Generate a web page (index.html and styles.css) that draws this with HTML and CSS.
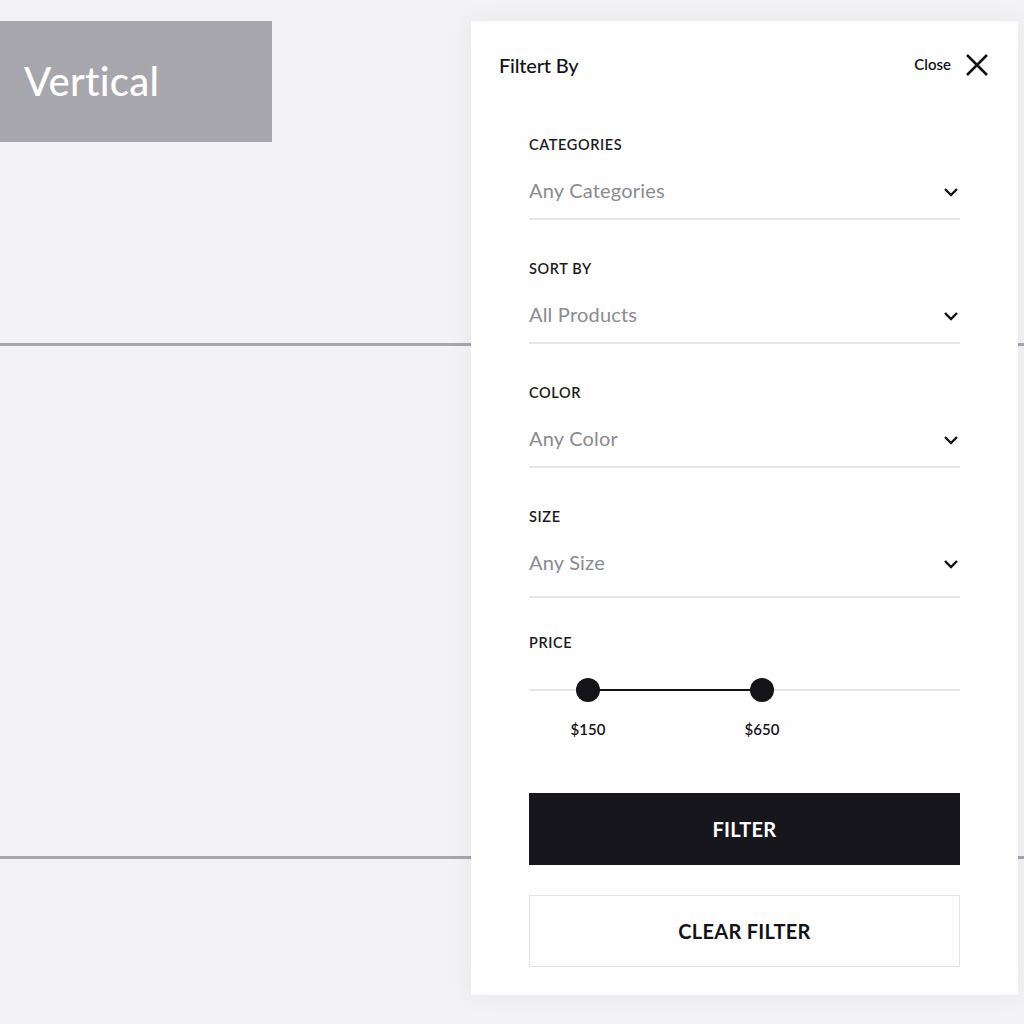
FILE: index.html
```html
<!DOCTYPE html>
<html lang="en">
<head>
<meta charset="utf-8">
<title>Filter</title>
<link rel="stylesheet" href="styles.css">
</head>
<body>
<div class="canvas">
  <div class="tag">Vertical</div>
  <div class="rule rule-top"></div>
  <div class="rule rule-bottom"></div>
</div>

<aside class="panel">
  <header class="panel-head">
    <h1 class="panel-title">Filtert By</h1>
    <button class="close">
      <span>Close</span>
      <svg width="24" height="24" viewBox="0 0 24 24" aria-hidden="true"><path d="M2 2 L22 22 M22 2 L2 22" stroke="#141418" stroke-width="2.6" fill="none"/></svg>
    </button>
  </header>

  <div class="fields">
    <div class="field">
      <div class="label">CATEGORIES</div>
      <div class="select"><span>Any Categories</span><svg class="chev" width="16" height="10" viewBox="0 0 16 10"><path d="M2 2 L8 8 L14 2" stroke="#141418" stroke-width="2.4" fill="none"/></svg></div>
    </div>
    <div class="field">
      <div class="label">SORT BY</div>
      <div class="select"><span>All Products</span><svg class="chev" width="16" height="10" viewBox="0 0 16 10"><path d="M2 2 L8 8 L14 2" stroke="#141418" stroke-width="2.4" fill="none"/></svg></div>
    </div>
    <div class="field">
      <div class="label">COLOR</div>
      <div class="select"><span>Any Color</span><svg class="chev" width="16" height="10" viewBox="0 0 16 10"><path d="M2 2 L8 8 L14 2" stroke="#141418" stroke-width="2.4" fill="none"/></svg></div>
    </div>
    <div class="field field-tall">
      <div class="label">SIZE</div>
      <div class="select"><span>Any Size</span><svg class="chev" width="16" height="10" viewBox="0 0 16 10"><path d="M2 2 L8 8 L14 2" stroke="#141418" stroke-width="2.4" fill="none"/></svg></div>
    </div>
    <div class="field price">
      <div class="label">PRICE</div>
      <div class="slider">
        <div class="track"></div>
        <div class="range" style="left:59px;width:174px"></div>
        <div class="thumb" style="left:59px"><span class="val">$150</span></div>
        <div class="thumb" style="left:233px"><span class="val">$650</span></div>
      </div>
    </div>
  </div>

  <div class="actions">
    <button class="btn btn-primary">FILTER</button>
    <button class="btn btn-outline">CLEAR FILTER</button>
  </div>
</aside>
</body>
</html>
```

FILE: styles.css
```css
* { box-sizing: border-box; }
html, body { margin: 0; padding: 0; }
body {
  width: 1024px;
  height: 1024px;
  background: #f3f3f5;
  font-family: "Lato", "Noto Sans", sans-serif;
  color: #141418;
  position: relative;
  overflow: hidden;
}

.canvas {
  padding-top: 21px;
  display: flex;
  flex-direction: column;
}
.tag {
  width: 272px;
  height: 121px;
  background: #a7a6ad;
  color: #fff;
  font-size: 40px;
  font-weight: 500;
  padding-left: 24px;
  display: flex;
  align-items: center;
  padding-bottom: 2px;
  letter-spacing: 0.3px;
}
.rule {
  height: 3px;
  background: #a6a6ab;
  width: 100%;
}
.rule-top { margin-top: 201px; }
.rule-bottom { margin-top: 510px; }

.panel {
  position: absolute;
  left: 471px;
  top: 21px;
  width: 547px;
  height: 974px;
  background: #fdfefd;
  box-shadow: 0 0 24px rgba(0,0,0,0.06);
  padding: 0 58px 0 58px;
  display: flex;
  flex-direction: column;
}

.panel-head {
  display: flex;
  align-items: center;
  justify-content: space-between;
  height: 88px;
  margin: 0 -29px 0 -30px;
  padding-bottom: 1px;
}
.panel-title {
  margin: 0;
  font-size: 20px;
  font-weight: 500;
  letter-spacing: -0.2px;
}
.close {
  background: none;
  border: 0;
  padding: 0;
  display: flex;
  align-items: center;
  gap: 14px;
  font-family: inherit;
  font-size: 15px;
  font-weight: 600;
  color: #141418;
}
.close span { margin-top: -2px; }

.fields {
  display: flex;
  flex-direction: column;
  padding-top: 26px;
}
.field {
  height: 124px;
  display: flex;
  flex-direction: column;
}
.field-tall { height: 126px; }
.label {
  font-size: 14.5px;
  font-weight: 600;
  letter-spacing: 0.6px;
  line-height: 20px;
  color: #1c1c20;
}
.select {
  display: flex;
  align-items: center;
  justify-content: space-between;
  height: 65px;
  border-bottom: 2px solid #e6e6e8;
  padding-top: 6px;
}
.select span {
  font-size: 20px;
  color: #8b8b90;
  letter-spacing: 0.2px;
}
.chev { margin-top: 4px; margin-right: 1px; }
.field-tall .select { height: 71px; padding-top: 0; }

.price { height: auto; }
.slider {
  position: relative;
  height: 130px;
}
.track {
  position: absolute;
  left: 0; right: 0;
  top: 36px;
  height: 2px;
  background: #e6e6e8;
}
.range {
  position: absolute;
  top: 36px;
  height: 2px;
  background: #141418;
}
.thumb {
  position: absolute;
  top: 37px;
  width: 24px;
  height: 24px;
  margin: -12px 0 0 -12px;
  border-radius: 50%;
  background: #141418;
}
.val {
  position: absolute;
  top: 32px;
  left: 50%;
  transform: translateX(-50%);
  font-size: 15px;
  font-weight: 600;
  white-space: nowrap;
  margin-top: 10px;
}

.actions {
  display: flex;
  flex-direction: column;
  gap: 30px;
  margin-top: 10px;
}
.btn {
  height: 72px;
  width: 100%;
  font-family: inherit;
  font-size: 20px;
  font-weight: 700;
  letter-spacing: 0.3px;
}
.btn-primary {
  background: #17161c;
  color: #fff;
  border: 0;
}
.btn-outline {
  background: #fdfefd;
  color: #141418;
  border: 1px solid #e4e4e6;
}
```
